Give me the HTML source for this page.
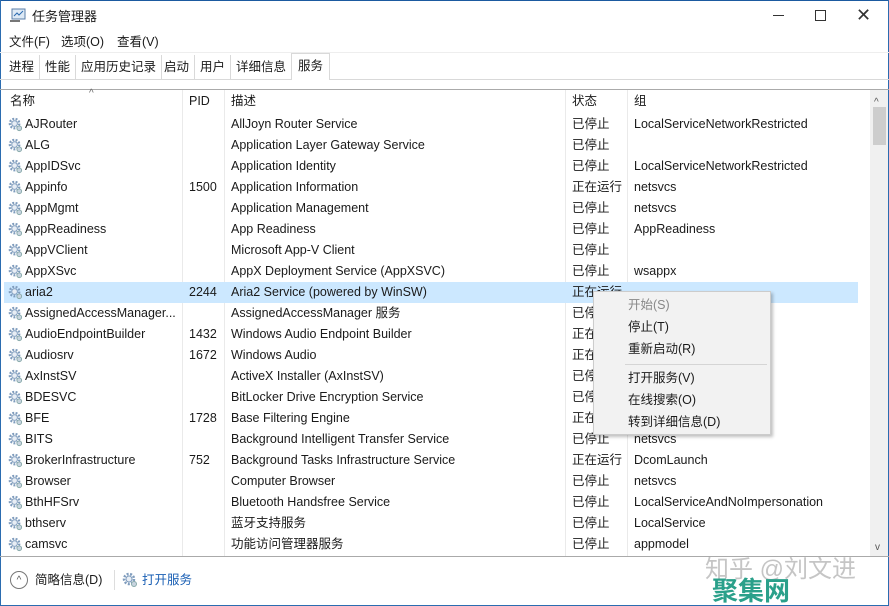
<!DOCTYPE html><html><head><meta charset="utf-8"><style>
*{margin:0;padding:0;box-sizing:border-box}
body{width:889px;height:606px;overflow:hidden;background:#fff;font-family:"Liberation Sans","Noto Sans CJK SC",sans-serif;font-size:12.5px;line-height:15px;color:#1a1a1a;position:relative}
.a{position:absolute;white-space:nowrap}
.row{position:absolute;left:4px;width:854px;height:21px}
.row span{position:absolute;top:3px;line-height:15px;height:15px}
.g{position:absolute;left:4px;top:3px;width:15px;height:15px}
.tab{position:absolute;top:55px;height:24px;line-height:24px;padding:0 5px;border-right:1px solid #d9d9d9}
.m{position:absolute;left:34px;font-size:12.5px}
</style></head><body>
<div class="a" style="left:0;top:0;width:889px;height:1px;background:#1b5aa0"></div>
<div class="a" style="left:0;top:0;width:1px;height:606px;background:#2b6cb0"></div>
<div class="a" style="right:0;top:0;width:1px;height:606px;background:#2b6cb0"></div>
<div class="a" style="left:0;bottom:0;width:889px;height:1px;background:#2b6cb0"></div>
<svg class="a" style="left:9px;top:8px" width="18" height="16"><rect x="3" y="1" width="13" height="10" fill="#dde9f5" stroke="#5a7ea8"/><polyline points="5,8 8,5 10,7 14,3" fill="none" stroke="#2a6ab0"/><rect x="1" y="12" width="10" height="2" fill="#777"/></svg>
<div class="a" style="left:32px;top:9px;font-size:13px">任务管理器</div>
<div class="a" style="left:773px;top:15px;width:11px;height:1px;background:#333"></div>
<div class="a" style="left:815px;top:10px;width:11px;height:11px;border:1px solid #333"></div>
<div class="a" style="left:856px;top:5px;font-size:18px;line-height:20px;color:#333">✕</div>
<div class="a" style="left:9px;top:35px">文件(F)</div>
<div class="a" style="left:61px;top:35px">选项(O)</div>
<div class="a" style="left:117px;top:35px">查看(V)</div>
<div class="a" style="left:0;top:52px;width:889px;height:1px;background:#eee"></div>
<div class="tab" style="left:4px">进程</div>
<div class="tab" style="left:40px">性能</div>
<div class="tab" style="left:76px">应用历史记录</div>
<div class="tab" style="left:159px">启动</div>
<div class="tab" style="left:195px">用户</div>
<div class="tab" style="left:231px">详细信息</div>
<div class="a" style="left:291px;top:53px;width:39px;height:27px;border:1px solid #d9d9d9;border-bottom:none;background:#fff;line-height:24px;padding-left:6px">服务</div>
<div class="a" style="left:0;top:79px;width:291px;height:1px;background:#d9d9d9"></div>
<div class="a" style="left:330px;top:79px;width:559px;height:1px;background:#d9d9d9"></div>
<div class="a" style="left:0;top:89px;width:889px;height:1px;background:#aaa"></div>
<div class="a" style="left:89px;top:86px;font-size:10px;color:#666">^</div>
<div class="a" style="left:10px;top:94px">名称</div>
<div class="a" style="left:189px;top:94px">PID</div>
<div class="a" style="left:231px;top:94px">描述</div>
<div class="a" style="left:572px;top:94px">状态</div>
<div class="a" style="left:634px;top:94px">组</div>
<div class="a" style="left:182px;top:90px;width:1px;height:466px;background:#eaeaea"></div>
<div class="a" style="left:224px;top:90px;width:1px;height:466px;background:#eaeaea"></div>
<div class="a" style="left:565px;top:90px;width:1px;height:466px;background:#eaeaea"></div>
<div class="a" style="left:627px;top:90px;width:1px;height:466px;background:#eaeaea"></div>
<div class="a" style="left:870px;top:90px;width:18px;height:466px;background:#f0f0f0"></div>
<div class="a" style="left:874px;top:95px;font-size:10px;color:#555">^</div>
<div class="a" style="left:873px;top:107px;width:13px;height:38px;background:#cdcdcd"></div>
<div class="a" style="left:875px;top:540px;font-size:10px;color:#555">v</div>
<div class="row" style="top:282px;background:#cce8ff"></div>
<div id="rows"></div>
<svg width="0" height="0" style="position:absolute"><defs><symbol id="gear" viewBox="0 0 16 16"><circle cx="7" cy="7" r="5" fill="none" stroke="#7f9cbd" stroke-width="2.5" stroke-dasharray="2 1.5"/><circle cx="7" cy="7" r="3" fill="#e8eef5" stroke="#7f9cbd"/><circle cx="12" cy="12" r="2.5" fill="#c8d4e0" stroke="#8aa"/></symbol></defs></svg>
<script>
var d=[["AJRouter","","AllJoyn Router Service","已停止","LocalServiceNetworkRestricted"],["ALG","","Application Layer Gateway Service","已停止",""],["AppIDSvc","","Application Identity","已停止","LocalServiceNetworkRestricted"],["Appinfo","1500","Application Information","正在运行","netsvcs"],["AppMgmt","","Application Management","已停止","netsvcs"],["AppReadiness","","App Readiness","已停止","AppReadiness"],["AppVClient","","Microsoft App-V Client","已停止",""],["AppXSvc","","AppX Deployment Service (AppXSVC)","已停止","wsappx"],["aria2","2244","Aria2 Service (powered by WinSW)","正在运行",""],["AssignedAccessManager...","","AssignedAccessManager 服务","已停止","erSvc"],["AudioEndpointBuilder","1432","Windows Audio Endpoint Builder","正在运行","stricted"],["Audiosrv","1672","Windows Audio","正在运行","stricted"],["AxInstSV","","ActiveX Installer (AxInstSV)","已停止",""],["BDESVC","","BitLocker Drive Encryption Service","已停止",""],["BFE","1728","Base Filtering Engine","正在运行",""],["BITS","","Background Intelligent Transfer Service","已停止","netsvcs"],["BrokerInfrastructure","752","Background Tasks Infrastructure Service","正在运行","DcomLaunch"],["Browser","","Computer Browser","已停止","netsvcs"],["BthHFSrv","","Bluetooth Handsfree Service","已停止","LocalServiceAndNoImpersonation"],["bthserv","","蓝牙支持服务","已停止","LocalService"],["camsvc","","功能访问管理器服务","已停止","appmodel"]];
var h="";d.forEach(function(r,i){var y=114+i*21;h+='<div class="row" style="top:'+y+'px"><svg class="g"><use href="#gear"/></svg><span style="left:21px">'+r[0]+'</span><span style="left:185px">'+r[1]+'</span><span style="left:227px">'+r[2]+'</span><span style="left:568px">'+r[3]+'</span><span style="left:630px">'+r[4]+'</span></div>';});
document.getElementById("rows").innerHTML=h;
</script>
<div class="a" style="left:593px;top:291px;width:178px;height:144px;background:#f2f2f2;border:1px solid #ccc;box-shadow:2px 2px 3px rgba(0,0,0,.25)">
<div class="m" style="top:6px;color:#888">开始(S)</div>
<div class="m" style="top:28px">停止(T)</div>
<div class="m" style="top:50px">重新启动(R)</div>
<div style="position:absolute;left:31px;top:72px;width:142px;height:1px;background:#d5d5d5"></div>
<div class="m" style="top:79px">打开服务(V)</div>
<div class="m" style="top:101px">在线搜索(O)</div>
<div class="m" style="top:123px">转到详细信息(D)</div>
</div>
<div class="a" style="left:0;top:556px;width:889px;height:1px;background:#aaa"></div>
<div class="a" style="left:10px;top:571px;width:18px;height:18px;border:1px solid #777;border-radius:50%;font-size:10px;text-align:center;line-height:17px;color:#555">^</div>
<div class="a" style="left:35px;top:573px">简略信息(D)</div>
<div class="a" style="left:114px;top:570px;width:1px;height:20px;background:#ddd"></div>
<svg class="a" style="left:122px;top:572px" width="16" height="16"><use href="#gear"/></svg>
<div class="a" style="left:142px;top:573px;color:#1a5fb4">打开服务</div>
<div class="a" style="left:705px;top:556px;font-size:24px;line-height:28px;color:rgba(150,150,150,.55)">知乎 @刘文进</div>
<div class="a" style="left:712px;top:576px;font-size:26px;line-height:30px;font-weight:bold;color:#2aa08a">聚集网</div>
</body></html>
